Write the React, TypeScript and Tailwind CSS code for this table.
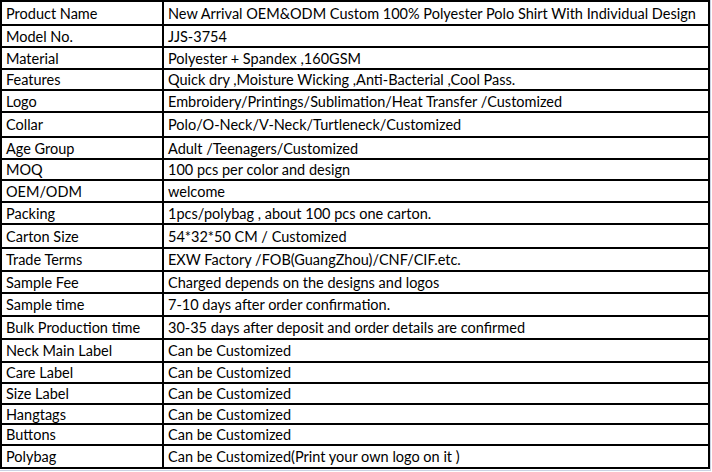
const rows: [string, string, number][] = [
  ["Product Name", "New Arrival OEM&ODM Custom 100% Polyester Polo Shirt With Individual Design", 24],
  ["Model No.", "JJS-3754", 22],
  ["Material", "Polyester + Spandex ,160GSM", 22],
  ["Features", "Quick dry ,Moisture Wicking ,Anti-Bacterial ,Cool Pass.", 21],
  ["Logo", "Embroidery/Printings/Sublimation/Heat Transfer /Customized", 22],
  ["Collar", "Polo/O-Neck/V-Neck/Turtleneck/Customized", 25],
  ["Age Group", "Adult /Teenagers/Customized", 22],
  ["MOQ", "100 pcs per color and design", 21],
  ["OEM/ODM", "welcome", 22],
  ["Packing", "1pcs/polybag , about 100 pcs one carton.", 22],
  ["Carton Size", "54*32*50 CM / Customized", 24],
  ["Trade Terms", "EXW Factory /FOB(GuangZhou)/CNF/CIF.etc.", 23],
  ["Sample Fee", "Charged depends on the designs and logos", 22],
  ["Sample time", "7-10 days after order confirmation.", 23],
  ["Bulk Production time", "30-35 days after deposit and order details are confirmed", 23],
  ["Neck Main Label", "Can be Customized", 23],
  ["Care Label", "Can be Customized", 21],
  ["Size Label", "Can be Customized", 21],
  ["Hangtags", "Can be Customized", 20],
  ["Buttons", "Can be Customized", 21],
  ["Polybag", "Can be Customized(Print your own logo on it )", 23],
];

export default function App() {
  return (
    <div className="h-[472px] w-[712px] overflow-hidden bg-white">
      <div className="w-[711px] border-r border-b border-[#c9d2e3] pb-[1px]">
        <div
          className="w-[710px] border-2 border-black text-[14.5px] leading-none text-black"
          style={{ fontFamily: "Lato, 'Open Sans', sans-serif" }}
        >
          {rows.map(([label, value, h], i) => {
            const last = i === rows.length - 1;
            return (
              <div
                key={label}
                className={`flex items-center ${last ? "" : "border-b-2 border-black"}`}
                style={{ height: last ? h - 2 : h }}
              >
                <div className="flex h-full w-[162px] items-center border-r-2 border-black pl-[4px] pt-[2px]">
                  {label}
                </div>
                <div className="flex h-full flex-1 items-center pl-[4px] pt-[2px]">{value}</div>
              </div>
            );
          })}
        </div>
      </div>
    </div>
  );
}
